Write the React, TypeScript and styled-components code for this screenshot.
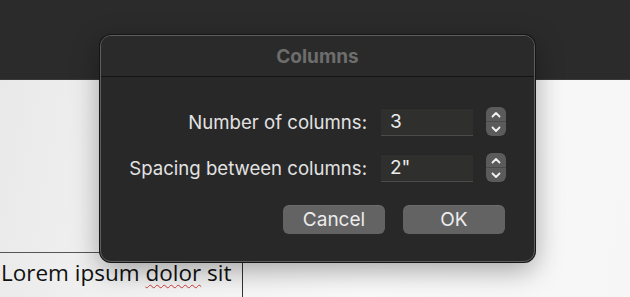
import React from "react";
import styled, { createGlobalStyle } from "styled-components";

const Global = createGlobalStyle`
  html, body { margin: 0; padding: 0; }
  body { width: 630px; height: 297px; overflow: hidden; background: #fff; }
`;

const Page = styled.div`
  position: relative;
  width: 630px;
  height: 297px;
  overflow: hidden;
  display: flex;
  flex-direction: column;
  font-family: Inter, "Liberation Sans", sans-serif;
`;

const TopBar = styled.div`
  height: 79px;
  flex: none;
  background: #2b2b2b;
  border-bottom: 1px solid #3a3a3a;
`;

const DocArea = styled.div`
  flex: 1;
  background: linear-gradient(100deg, #e9e9e9 0%, #f4f4f4 30%, #fafafa 60%, #f6f6f6 100%);
  padding-top: 172px;
`;

const Cell = styled.div`
  width: 243px;
  height: 60px;
  border-top: 1px solid #555;
  border-right: 1px solid #333;
  box-sizing: border-box;
  padding: 5px 0 0 1px;
  font-family: "Open Sans", "Noto Sans", sans-serif;
  font-size: 22.5px;
  line-height: 30px;
  color: #111;
  white-space: nowrap;
`;

const Misspelled = styled.span`
  text-decoration: underline wavy #d23b3b;
  text-decoration-thickness: 1px;
  text-underline-offset: 3px;
`;

const Dialog = styled.div`
  position: absolute;
  left: 100px;
  top: 35px;
  width: 435px;
  height: 227px;
  box-sizing: border-box;
  background: #282828;
  border: 1px solid #5e5e5e;
  border-radius: 11px;
  box-shadow: 0 0 0 1px #151515, 0 8px 28px rgba(0, 0, 0, 0.35);
  display: flex;
  flex-direction: column;
  overflow: hidden;
`;

const TitleBar = styled.div`
  height: 40px;
  flex: none;
  display: flex;
  align-items: center;
  justify-content: center;
  border-bottom: 1px solid #141414;
  color: #6d6d6d;
  font-weight: 700;
  font-size: 19px;
  background: #2a2a2a;
`;

const Body = styled.div`
  flex: 1;
  display: flex;
  flex-direction: column;
  padding: 30px 28px 0 0;
`;

const Fields = styled.div`
  display: grid;
  grid-template-columns: auto 92px 20px;
  justify-content: end;
  column-gap: 13px;
  row-gap: 17px;
  align-items: center;
`;

const Label = styled.div`
  justify-self: end;
  color: #e2e2e2;
  font-size: 18.6px;
  padding-right: 1px;
`;

const Input = styled.div`
  height: 28px;
  box-sizing: border-box;
  background: #2f2f2e;
  border-top: 1px solid #262626;
  border-bottom: 1px solid #4a4a4a;
  color: #ececec;
  font-size: 19px;
  display: flex;
  align-items: center;
  padding-left: 9px;
`;

const Stepper = styled.div`
  width: 20px;
  height: 29px;
  border-radius: 6px;
  background: #5b5b5b;
  display: flex;
  flex-direction: column;
  overflow: hidden;
`;

const StepHalf = styled.div<{ $top?: boolean }>`
  flex: 1;
  display: flex;
  align-items: center;
  justify-content: center;
  border-bottom: ${(p) => (p.$top ? "1px solid #4a4a4a" : "none")};
`;

const Buttons = styled.div`
  display: flex;
  justify-content: flex-end;
  gap: 18px;
  margin-top: 23px;
  padding-right: 1px;
`;

const Button = styled.button`
  width: 102px;
  height: 29px;
  border: none;
  border-radius: 6px;
  background: #636363;
  color: #ececec;
  font-family: inherit;
  font-size: 19px;
  padding: 0;
  box-shadow: inset 0 1px 0 rgba(255, 255, 255, 0.06);
`;

const Chevron = ({ up }: { up?: boolean }) => (
  <svg width="10" height="7" viewBox="0 0 10 7">
    <path
      d={up ? "M1.5 5.5 L5 2 L8.5 5.5" : "M1.5 1.5 L5 5 L8.5 1.5"}
      fill="none"
      stroke="#f2f2f2"
      strokeWidth="1.8"
      strokeLinecap="round"
      strokeLinejoin="round"
    />
  </svg>
);

const Spin = () => (
  <Stepper>
    <StepHalf $top>
      <Chevron up />
    </StepHalf>
    <StepHalf>
      <Chevron />
    </StepHalf>
  </Stepper>
);

export default function App() {
  return (
    <Page>
      <Global />
      <TopBar />
      <DocArea>
        <Cell>
          Lorem ipsum <Misspelled>dolor</Misspelled> sit
        </Cell>
      </DocArea>
      <Dialog>
        <TitleBar>Columns</TitleBar>
        <Body>
          <Fields>
            <Label>Number of columns:</Label>
            <Input>3</Input>
            <Spin />
            <Label>Spacing between columns:</Label>
            <Input>2"</Input>
            <Spin />
          </Fields>
          <Buttons>
            <Button>Cancel</Button>
            <Button>OK</Button>
          </Buttons>
        </Body>
      </Dialog>
    </Page>
  );
}
